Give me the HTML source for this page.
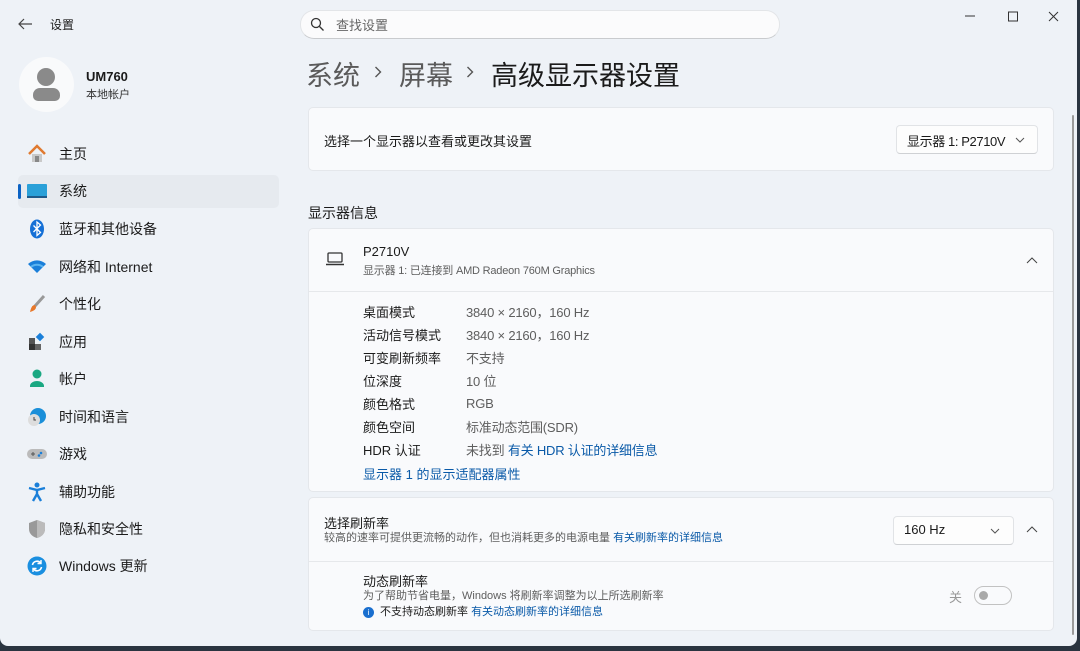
<!DOCTYPE html>
<html><head><meta charset="utf-8"><style>
*{margin:0;padding:0;box-sizing:border-box}
body{width:1080px;height:651px;overflow:hidden;background:#2a3440;font-family:"Liberation Sans","Noto Sans CJK SC",sans-serif;color:#1a1a1a;position:relative}
#win{position:absolute;left:0;top:0;width:1077px;height:646px;background:#eef2f7;border-radius:0 0 8px 8px;overflow:hidden}
.a{position:absolute;white-space:nowrap}
.nav{position:absolute;left:59px;font-size:14px;color:#1b1b1b}
.card{position:absolute;left:308px;width:746px;background:#f9fafc;border:1px solid #e4e7eb;border-radius:5px}
.lbl{position:absolute;left:363px;font-size:13px;color:#1b1b1b}
.val{position:absolute;left:466px;font-size:13px;color:#5e5e5e;letter-spacing:-0.2px}
.link{color:#0a5aa8}
.ico{position:absolute;left:27px;width:20px;height:20px}
</style></head><body><div id="win">
<svg class="a" style="left:17px;top:17px" width="16" height="14" viewBox="0 0 16 14"><path d="M15 7H2M7 2L2 7l5 5" stroke="#444" stroke-width="1.2" fill="none"/></svg>
<div class="a" style="left:50px;top:16px;font-size:12px;color:#1b1b1b">设置</div>
<div class="a" style="left:300px;top:10px;width:480px;height:29px;background:#fbfbfc;border:1px solid #e3e5e8;border-bottom-color:#c9cbce;border-radius:14px"></div>
<svg class="a" style="left:310px;top:17px" width="15" height="15" viewBox="0 0 15 15"><circle cx="6" cy="6" r="4.5" stroke="#333" stroke-width="1.3" fill="none"/><path d="M9.5 9.5L13.5 13.5" stroke="#333" stroke-width="1.3"/></svg>
<div class="a" style="left:336px;top:15px;font-size:13px;color:#666">查找设置</div>
<svg class="a" style="left:962px;top:8px" width="100" height="18" viewBox="0 0 100 18"><path d="M3 8h10" stroke="#333"/><rect x="46.5" y="4" width="9" height="9" fill="none" stroke="#333"/><path d="M87 4l9 9M96 4l-9 9" stroke="#333"/></svg>
<div class="a" style="left:19px;top:57px;width:55px;height:55px;border-radius:50%;background:#f9fafb"></div>
<div class="a" style="left:37px;top:68px;width:18px;height:18px;border-radius:50%;background:#8a8a8a"></div>
<div class="a" style="left:33px;top:88px;width:27px;height:13px;border-radius:7px 7px 5px 5px;background:#8a8a8a"></div>
<div class="a" style="left:86px;top:69px;font-size:13px;font-weight:bold">UM760</div>
<div class="a" style="left:86px;top:86px;font-size:11px;color:#333">本地帐户</div>
<div class="a" style="left:18px;top:175px;width:261px;height:33px;background:#e6eaef;border-radius:5px"></div>
<div class="a" style="left:18px;top:184px;width:3px;height:15px;background:#0b62c4;border-radius:2px"></div>
<svg class="ico" style="top:144px" viewBox="0 0 20 20"><path d="M2 10L10 2l8 8" stroke="#e07a30" stroke-width="2.5" fill="none"/><path d="M5 10v8h10v-8" fill="#c9c9c9"/><rect x="8" y="12" width="4" height="6" fill="#888"/></svg>
<svg class="ico" style="top:181px" viewBox="0 0 20 20"><rect x="0" y="3" width="20" height="14" rx="1" fill="#2aa0d8"/><rect x="0" y="15" width="20" height="2" fill="#1e5a8a"/></svg>
<svg class="ico" style="top:219px" viewBox="0 0 20 20"><ellipse cx="10" cy="10" rx="7" ry="9.5" fill="#1570d6"/><path d="M6.5 6.5l7 7-3.5 3V3l3.5 3-7 7" stroke="#fff" stroke-width="1.3" fill="none"/></svg>
<svg class="ico" style="top:257px" viewBox="0 0 20 20"><path d="M1 7a13 13 0 0118 0L10 16z" fill="#1a7fd9"/><path d="M4 10a9 9 0 0112 0" stroke="#5bb4f0" stroke-width="2" fill="none"/></svg>
<svg class="ico" style="top:294px" viewBox="0 0 20 20"><path d="M17 2L8 12" stroke="#999" stroke-width="3"/><path d="M8 11c-3 0-4 3-5 7 3-1 6-2 6-5z" fill="#e8782a"/></svg>
<svg class="ico" style="top:332px" viewBox="0 0 20 20"><rect x="2" y="6" width="6" height="6" fill="#555"/><rect x="2" y="12" width="6" height="6" fill="#333"/><rect x="8" y="12" width="6" height="6" fill="#666"/><rect x="10" y="2" width="6" height="6" fill="#1a7fd9" transform="rotate(45 13 5)"/></svg>
<svg class="ico" style="top:369px" viewBox="0 0 20 20"><circle cx="10" cy="5" r="4.5" fill="#1aa882"/><path d="M3 17a7 5 0 0114 0v1H3z" fill="#1aa882"/></svg>
<svg class="ico" style="top:407px" viewBox="0 0 20 20"><circle cx="11" cy="9" r="8" fill="#1a8fd9"/><circle cx="7" cy="13" r="6" fill="#ddd"/><path d="M7 10v3h2" stroke="#444" stroke-width="1" fill="none"/></svg>
<svg class="ico" style="top:444px" viewBox="0 0 20 20"><rect x="0" y="5" width="20" height="10" rx="5" fill="#bbb"/><path d="M4 10h4M6 8v4" stroke="#555"/><circle cx="14" cy="9" r="1.3" fill="#1a7fd9"/><circle cx="12" cy="11.5" r="1.3" fill="#1a7fd9"/></svg>
<svg class="ico" style="top:482px" viewBox="0 0 20 20"><circle cx="10" cy="3" r="2.5" fill="#1a7fd9"/><path d="M2 6l8 2 8-2M10 8v4l-4 7M10 12l4 7" stroke="#1a7fd9" stroke-width="2.4" fill="none"/></svg>
<svg class="ico" style="top:519px" viewBox="0 0 20 20"><path d="M10 1l8 3v6c0 5-4 8-8 9-4-1-8-4-8-9V4z" fill="#999"/><path d="M10 1l8 3v6c0 5-4 8-8 9z" fill="#bbb"/></svg>
<svg class="ico" style="top:556px" viewBox="0 0 20 20"><circle cx="10" cy="10" r="9.5" fill="#1a8fe0"/><path d="M5.5 9a4.5 4.5 0 018-2M14.5 11a4.5 4.5 0 01-8 2" stroke="#fff" stroke-width="1.6" fill="none"/><path d="M14 4v3.5h-3.5M6 16v-3.5h3.5" stroke="#fff" stroke-width="1.4" fill="none"/></svg>
<div class="nav" style="top:144px">主页</div>
<div class="nav" style="top:181px">系统</div>
<div class="nav" style="top:219px">蓝牙和其他设备</div>
<div class="nav" style="top:257px">网络和 Internet</div>
<div class="nav" style="top:294px">个性化</div>
<div class="nav" style="top:332px">应用</div>
<div class="nav" style="top:369px">帐户</div>
<div class="nav" style="top:407px">时间和语言</div>
<div class="nav" style="top:444px">游戏</div>
<div class="nav" style="top:482px">辅助功能</div>
<div class="nav" style="top:519px">隐私和安全性</div>
<div class="nav" style="top:556px">Windows 更新</div>
<div class="a" style="left:306px;top:54px;font-size:27px;color:#5a5a5a">系统</div>
<svg class="a" style="left:374px;top:66px" width="8" height="12"><path d="M1.5 1l5 5-5 5" stroke="#555" stroke-width="1.4" fill="none"/></svg>
<div class="a" style="left:399px;top:54px;font-size:27px;color:#5a5a5a">屏幕</div>
<svg class="a" style="left:466px;top:66px" width="8" height="12"><path d="M1.5 1l5 5-5 5" stroke="#555" stroke-width="1.4" fill="none"/></svg>
<div class="a" style="left:491px;top:54px;font-size:27px;color:#1b1b1b">高级显示器设置</div>
<div class="card" style="top:107px;height:64px"></div>
<div class="a" style="left:324px;top:131px;font-size:13px">选择一个显示器以查看或更改其设置</div>
<div class="a" style="left:896px;top:125px;width:142px;height:29px;background:#fdfdfd;border:1px solid #e1e3e6;border-bottom-color:#cfd1d4;border-radius:4px"></div>
<div class="a" style="left:907px;top:131px;font-size:13px;letter-spacing:-0.4px">显示器 1: P2710V</div>
<svg class="a" style="left:1015px;top:137px" width="10" height="6"><path d="M1 1l4 4 4-4" stroke="#555" fill="none"/></svg>
<div class="a" style="left:308px;top:203px;font-size:14px">显示器信息</div>
<div class="card" style="top:228px;height:264px"></div>
<div class="a" style="left:309px;top:291px;width:744px;height:1px;background:#e6e8eb"></div>
<svg class="a" style="left:325px;top:251px" width="20" height="16" viewBox="0 0 20 16"><rect x="3" y="2" width="14" height="9" rx="1" stroke="#333" stroke-width="1.3" fill="none"/><path d="M1 13.5h18" stroke="#333" stroke-width="1.5"/></svg>
<div class="a" style="left:363px;top:244px;font-size:13px">P2710V</div>
<div class="a" style="left:363px;top:262px;font-size:11px;color:#5e5e5e;letter-spacing:-0.2px">显示器 1: 已连接到 AMD Radeon 760M Graphics</div>
<svg class="a" style="left:1026px;top:257px" width="12" height="7"><path d="M1 6l5-5 5 5" stroke="#444" fill="none"/></svg>
<div class="lbl" style="top:302px">桌面模式</div><div class="val" style="top:302px">3840 × 2160，160 Hz</div>
<div class="lbl" style="top:325px">活动信号模式</div><div class="val" style="top:325px">3840 × 2160，160 Hz</div>
<div class="lbl" style="top:348px">可变刷新频率</div><div class="val" style="top:348px">不支持</div>
<div class="lbl" style="top:371px">位深度</div><div class="val" style="top:371px">10 位</div>
<div class="lbl" style="top:394px">颜色格式</div><div class="val" style="top:396px">RGB</div>
<div class="lbl" style="top:417px">颜色空间</div><div class="val" style="top:417px">标准动态范围(SDR)</div>
<div class="lbl" style="top:440px">HDR 认证</div><div class="val" style="top:440px">未找到 <span class="link">有关 HDR 认证的详细信息</span></div>
<div class="lbl link" style="top:464px">显示器 1 的显示适配器属性</div>
<div class="card" style="top:497px;height:134px"></div>
<div class="a" style="left:309px;top:561px;width:744px;height:1px;background:#e6e8eb"></div>
<div class="a" style="left:324px;top:513px;font-size:13px">选择刷新率</div>
<div class="a" style="left:324px;top:529px;font-size:11px;color:#5e5e5e">较高的速率可提供更流畅的动作，但也消耗更多的电源电量 <span class="link">有关刷新率的详细信息</span></div>
<div class="a" style="left:893px;top:516px;width:121px;height:29px;background:#fdfdfd;border:1px solid #e1e3e6;border-bottom-color:#cfd1d4;border-radius:4px"></div>
<div class="a" style="left:904px;top:522px;font-size:13px">160 Hz</div>
<svg class="a" style="left:990px;top:528px" width="10" height="6"><path d="M1 1l4 4 4-4" stroke="#555" fill="none"/></svg>
<svg class="a" style="left:1026px;top:526px" width="12" height="7"><path d="M1 6l5-5 5 5" stroke="#444" fill="none"/></svg>
<div class="a" style="left:363px;top:571px;font-size:13px">动态刷新率</div>
<div class="a" style="left:363px;top:587px;font-size:11px;color:#5e5e5e">为了帮助节省电量，Windows 将刷新率调整为以上所选刷新率</div>
<div class="a" style="left:363px;top:607px;width:11px;height:11px;border-radius:50%;background:#1a6fcf;color:#fff;font-size:8px;text-align:center;line-height:11px">i</div>
<div class="a" style="left:380px;top:603px;font-size:11px;color:#1b1b1b">不支持动态刷新率 <span class="link">有关动态刷新率的详细信息</span></div>
<div class="a" style="left:949px;top:587px;font-size:13px;color:#999">关</div>
<div class="a" style="left:974px;top:586px;width:38px;height:19px;border:1px solid #c2c2c2;border-radius:10px"></div>
<div class="a" style="left:979px;top:591px;width:9px;height:9px;border-radius:50%;background:#a9a9a9"></div>
<div class="a" style="left:1072px;top:115px;width:2px;height:520px;background:#9a9a9a;border-radius:1px"></div>
</div></body></html>
